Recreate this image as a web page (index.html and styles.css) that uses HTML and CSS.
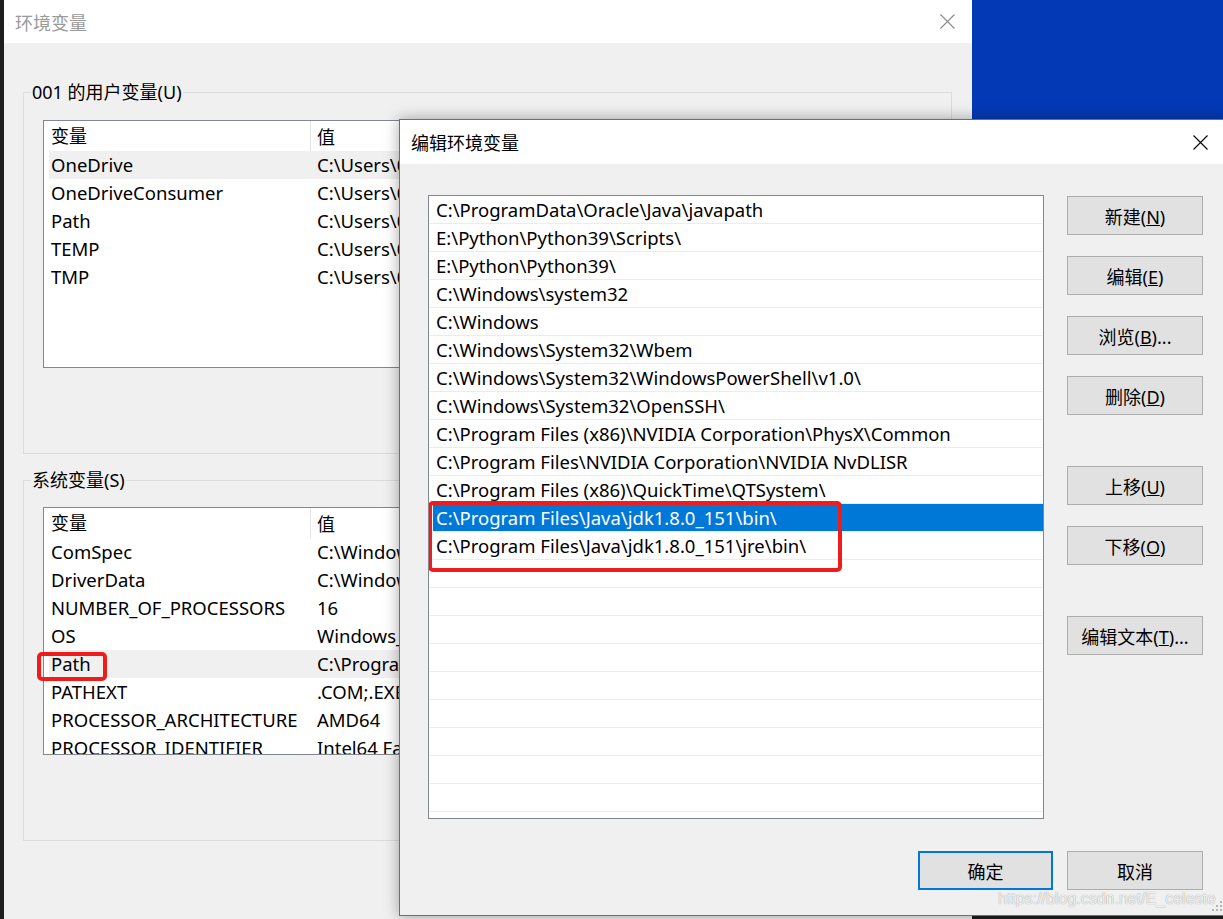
FILE: index.html
```html
<!DOCTYPE html>
<html lang="zh-CN">
<head>
  <meta charset="UTF-8" />
  <title>编辑环境变量</title>
  <link rel="stylesheet" href="styles.css">
</head>
<body>
<div class="desktop">
  <div class="wallpaper"></div>

  <!-- back window: 环境变量 -->
  <section class="window env-window">
    <div class="titlebar">
      <span class="title">环境变量</span>
      <svg class="close" width="15" height="15" viewBox="0 0 15 15"><path d="M0.5 0.5L14.5 14.5M14.5 0.5L0.5 14.5" stroke="#8a8a8a" stroke-width="1.1" fill="none"/></svg>
    </div>
    <div class="window-body">
      <fieldset class="group">
        <legend>001 的用户变量(U)</legend>
        <div class="var-list">
          <div class="var-scroll">
            <div class="var-head"><span>变量</span><span>值</span></div>
            <div class="var-row active"><span>OneDrive</span><span>C:\Users\001\OneDrive</span></div>
            <div class="var-row"><span>OneDriveConsumer</span><span>C:\Users\001\OneDrive</span></div>
            <div class="var-row"><span>Path</span><span>C:\Users\001\AppData\Local\Microsoft\WindowsApps;</span></div>
            <div class="var-row"><span>TEMP</span><span>C:\Users\001\AppData\Local\Temp</span></div>
            <div class="var-row"><span>TMP</span><span>C:\Users\001\AppData\Local\Temp</span></div>
          </div>
        </div>
      </fieldset>

      <fieldset class="group system-group">
        <legend>系统变量(S)</legend>
        <div class="var-list">
          <div class="var-scroll">
            <div class="var-head"><span>变量</span><span>值</span></div>
            <div class="var-row"><span>ComSpec</span><span>C:\Windows\system32\cmd.exe</span></div>
            <div class="var-row"><span>DriverData</span><span>C:\Windows\System32\Drivers\DriverData</span></div>
            <div class="var-row"><span>NUMBER_OF_PROCESSORS</span><span>16</span></div>
            <div class="var-row"><span>OS</span><span>Windows_NT</span></div>
            <div class="var-row active"><span>Path</span><span>C:\Program Files\Java\jdk1.8.0_151\bin\</span></div>
            <div class="var-row"><span>PATHEXT</span><span>.COM;.EXE;.BAT;.CMD;.VBS</span></div>
            <div class="var-row"><span>PROCESSOR_ARCHITECTURE</span><span>AMD64</span></div>
            <div class="var-row"><span>PROCESSOR_IDENTIFIER</span><span>Intel64 Family 6 Model 165</span></div>
          </div>
          <div class="mark path-mark"></div>
        </div>
      </fieldset>
    </div>
  </section>

  <!-- front dialog: 编辑环境变量 -->
  <section class="window edit-dialog">
    <div class="titlebar">
      <span class="title">编辑环境变量</span>
      <svg class="close" width="15" height="15" viewBox="0 0 15 15"><path d="M0.5 0.5L14.5 14.5M14.5 0.5L0.5 14.5" stroke="#000" stroke-width="1.1" fill="none"/></svg>
    </div>
    <div class="dialog-body">
      <div class="dialog-main">
        <div class="path-list">
          <div class="path-row">C:\ProgramData\Oracle\Java\javapath</div>
          <div class="path-row">E:\Python\Python39\Scripts\</div>
          <div class="path-row">E:\Python\Python39\</div>
          <div class="path-row">C:\Windows\system32</div>
          <div class="path-row">C:\Windows</div>
          <div class="path-row">C:\Windows\System32\Wbem</div>
          <div class="path-row">C:\Windows\System32\WindowsPowerShell\v1.0\</div>
          <div class="path-row">C:\Windows\System32\OpenSSH\</div>
          <div class="path-row">C:\Program Files (x86)\NVIDIA Corporation\PhysX\Common</div>
          <div class="path-row">C:\Program Files\NVIDIA Corporation\NVIDIA NvDLISR</div>
          <div class="path-row">C:\Program Files (x86)\QuickTime\QTSystem\</div>
          <div class="path-row selected">C:\Program Files\Java\jdk1.8.0_151\bin\</div>
          <div class="path-row">C:\Program Files\Java\jdk1.8.0_151\jre\bin\</div>
          <div class="path-row"></div>
          <div class="path-row"></div>
          <div class="path-row"></div>
          <div class="path-row"></div>
          <div class="path-row"></div>
          <div class="path-row"></div>
          <div class="path-row"></div>
          <div class="path-row"></div>
          <div class="path-row"></div>
          <div class="mark jdk-mark"></div>
        </div>

        <div class="btn-col">
          <button class="btn">新建(<u>N</u>)</button>
          <button class="btn">编辑(<u>E</u>)</button>
          <button class="btn">浏览(<u>B</u>)...</button>
          <button class="btn">删除(<u>D</u>)</button>
          <button class="btn spaced">上移(<u>U</u>)</button>
          <button class="btn">下移(<u>O</u>)</button>
          <button class="btn spaced">编辑文本(<u>T</u>)...</button>
        </div>
      </div>

      <div class="dialog-footer">
        <button class="btn default">确定</button>
        <button class="btn">取消</button>
      </div>
    </div>
    <svg class="grip" width="12" height="12" viewBox="0 0 12 12">
      <rect x="9" y="1" width="2" height="2" fill="#b5b5b5"/>
      <rect x="5" y="5" width="2" height="2" fill="#b5b5b5"/>
      <rect x="9" y="5" width="2" height="2" fill="#b5b5b5"/>
      <rect x="1" y="9" width="2" height="2" fill="#b5b5b5"/>
      <rect x="5" y="9" width="2" height="2" fill="#b5b5b5"/>
      <rect x="9" y="9" width="2" height="2" fill="#b5b5b5"/>
    </svg>
  </section>

  <div class="watermark">https://blog.csdn.net/E_celeste</div>
</div>
</body>
</html>
```

FILE: styles.css
```css
:root {
  --face: #f0f0f0;
  --list-border: #828790;
  --btn-face: #e1e1e1;
  --btn-border: #adadad;
  --accent: #0078d7;
  --mark: #f01c1c;
}

body {
  margin: 0;
  font-family: "Noto Sans", "Noto Sans CJK SC", sans-serif;
  font-size: 18px;
  color: #000;
}

.desktop {
  position: relative;
  width: 1223px;
  height: 919px;
  overflow: hidden;
  background: #1e1e1e;
}

.wallpaper {
  position: absolute;
  left: 972px;
  top: 0;
  width: 251px;
  height: 120px;
  background: #0439b6;
}

.window {
  position: absolute;
  box-sizing: border-box;
  background: var(--face);
}

.titlebar {
  display: flex;
  align-items: center;
  background: #fff;
  padding-left: 11px;
}

.title {
  font-size: 18px;
}

.close {
  margin-left: auto;
}

/* back window */
.env-window {
  left: 4px;
  top: 0;
  width: 968px;
  height: 940px;
}

.env-window .titlebar {
  height: 43px;
}

.env-window .title {
  color: #9a9a9a;
}

.env-window .close {
  margin-right: 17px;
}

.window-body {
  padding: 39px 20px 0 19px;
}

.group {
  margin: 0;
  padding: 0 19px 85px 7px;
  border: 1px solid #dcdcdc;
  min-width: 0;
}

.group legend {
  padding: 0 1px;
  font-size: 18px;
  line-height: 20px;
}

.system-group {
  margin-top: 16px;
}

.var-list {
  position: relative;
  box-sizing: border-box;
  height: 248px;
  margin: 18px 0 0 12px;
  border: 1px solid var(--list-border);
  background: #fff;
}

.system-group .var-list {
  margin-top: 17px;
}

.var-scroll {
  height: 100%;
  overflow: hidden;
  padding-left: 5px;
}

.var-head,
.var-row {
  display: grid;
  align-items: center;
  white-space: nowrap;
}

.var-head {
  grid-template-columns: 262px 1fr;
  height: 30px;
}

.var-head span:first-child {
  padding-left: 2px;
  border-right: 1px solid #e5e5e5;
  line-height: 30px;
}

.var-head span:last-child {
  padding-left: 6px;
}

.var-row {
  grid-template-columns: 266px 1fr;
  height: 28px;
  font-size: 18.5px;
  line-height: 26px;
}

.var-row span {
  padding-left: 2px;
  overflow: hidden;
}

.var-row.active {
  background: #f0f0f0;
}

.mark {
  position: absolute;
  box-sizing: border-box;
  border: 4px solid var(--mark);
  border-radius: 5px;
}

.path-mark {
  left: -7px;
  top: 144px;
  width: 70px;
  height: 29px;
}

/* front dialog */
.edit-dialog {
  left: 399px;
  top: 119px;
  width: 828px;
  height: 797px;
  border: 1px solid #6f6f6f;
  box-shadow: 0 0 14px rgba(0, 0, 0, 0.35);
}

.edit-dialog .titlebar {
  height: 44px;
}

.edit-dialog .close {
  margin-right: 18px;
}

.dialog-body {
  padding: 31px 23px 0 28px;
}

.dialog-main {
  display: flex;
  gap: 23px;
}

.path-list {
  position: relative;
  box-sizing: border-box;
  width: 616px;
  height: 624px;
  border: 1px solid var(--list-border);
  background: #fff;
  overflow: hidden;
}

.path-row {
  box-sizing: border-box;
  height: 28px;
  padding: 1px 0 0 7px;
  font-size: 18.5px;
  line-height: 26px;
  border-bottom: 1px solid #ececec;
  white-space: nowrap;
}

.path-row.selected {
  margin-left: 4px;
  padding-left: 3px;
  background: var(--accent);
  color: #fff;
}

.jdk-mark {
  left: -1px;
  top: 305px;
  width: 414px;
  height: 71px;
}

.btn-col {
  display: flex;
  flex-direction: column;
  gap: 21px;
  padding-top: 1px;
}

.btn {
  box-sizing: border-box;
  width: 136px;
  height: 39px;
  padding: 0;
  background: var(--btn-face);
  border: 1px solid var(--btn-border);
  font-family: inherit;
  font-size: 18px;
  color: #000;
}

.btn.spaced {
  margin-top: 30px;
}

.dialog-footer {
  display: flex;
  justify-content: flex-end;
  gap: 14px;
  margin-top: 32px;
}

.btn.default {
  width: 135px;
  border: 2px solid var(--accent);
}

.grip {
  position: absolute;
  right: 3px;
  bottom: 3px;
}

.watermark {
  position: absolute;
  left: 998px;
  top: 890px;
  font-family: "Liberation Sans", Arial, sans-serif;
  font-size: 16px;
  color: rgba(255, 255, 255, 0.85);
  text-shadow: 0 0 1px rgba(0, 0, 0, 0.45);
}
```
